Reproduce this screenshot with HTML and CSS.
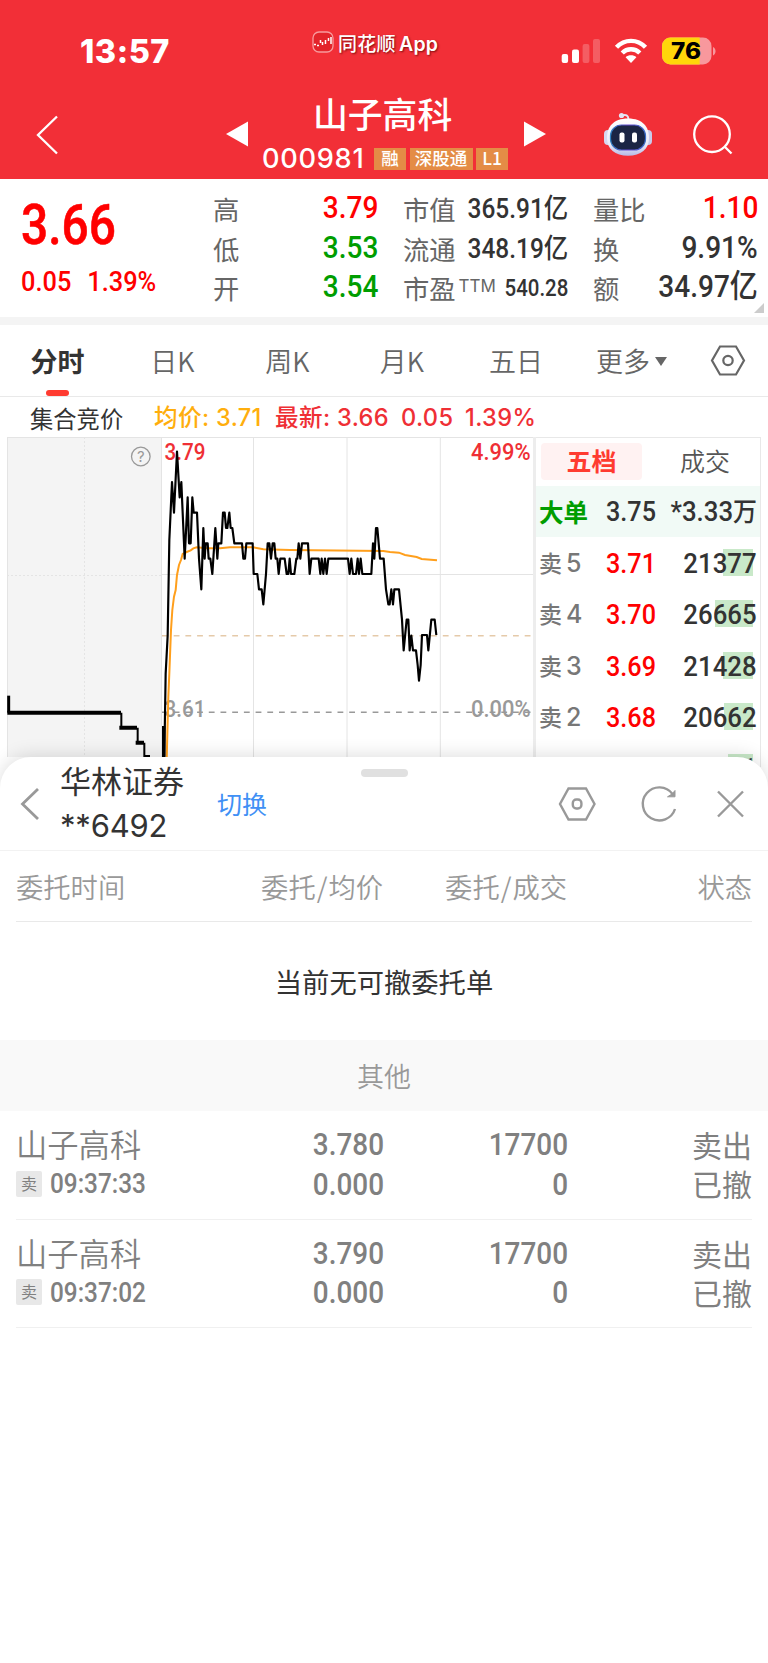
FILE: index.html
```html
<!DOCTYPE html>
<html lang="zh-CN">
<head>
<meta charset="utf-8">
<title>山子高科 000981</title>
<link rel="stylesheet" href="styles.css">
</head>
<body>
<header class="top">
  <div class="status">
    <span class="clock">13:57</span>
    <span class="brand">
      <svg class="brand-logo" width="22" height="22" viewBox="0 0 22 22" fill="none"><rect x="1" y="1" width="20" height="20" rx="6" fill="#e3242b" stroke="#f79a9d" stroke-width="1.3"/><path d="M2 13.5h2M5 14.5h2M8.500 9v3M10.500 11v3M13.500 9v4M16.500 7v3M19 6v7" stroke="#fff" stroke-width="1.5"/></svg>
      <span class="brand-name">同花顺<b>App</b></span>
    </span>
    <svg class="sys" width="158" height="30" viewBox="560 36 158 30">
      <g fill="#fff"><rect x="561.700" y="54" width="6.400" height="9" rx="2"/><rect x="572" y="49.500" width="7" height="13.500" rx="2"/><g opacity=".22"><rect x="582.600" y="44" width="6.800" height="19" rx="2"/><rect x="593" y="39" width="7" height="24" rx="2"/></g></g>
      <g fill="none" stroke="#fff" stroke-width="4.400"><path d="M616.500 47.300C624.500 38.700 637.500 38.700 645.500 47.300"/><path d="M622.200 53C627 48 635 48 639.800 53"/></g>
      <path d="M625.600 57.300C628.500 54.700 633.500 54.700 636.400 57.300L631 63Z" fill="#fff"/>
      <rect x="662" y="37.500" width="49.500" height="27" rx="8.500" fill="#f8989d"/>
      <path d="M670.500 37.500H699.700V64.500H670.500A8.500 8.500 0 0 1 662 56V46A8.500 8.500 0 0 1 670.500 37.500Z" fill="#ffd60a"/>
      <path d="M713 47c3.400 1.500 3.400 7 0 8.500z" fill="#f8989d"/>
      <text class="battery" x="686" y="59.300" text-anchor="middle" textLength="30" lengthAdjust="spacingAndGlyphs">76</text>
    </svg>
  </div>
  <div class="nav">
    <svg class="back" width="24" height="42" viewBox="36 114 24 42"><path d="M57 116.500 38 135 57 153.500" fill="none" stroke="#fff" stroke-width="2.300"/></svg>
    <svg class="prev" width="24" height="26" viewBox="225 121.500 24 26"><path d="M226 134.500 248 122v25z" fill="#fff"/></svg>
    <div class="stock">
      <div class="stock-name">山子高科</div>
      <div class="stock-meta"><span class="code">000981</span><span class="tag t1">融</span><span class="tag t2">深股通</span><span class="tag t3">L1</span></div>
    </div>
    <svg class="next" width="24" height="26" viewBox="523 121.500 24 26"><path d="M546 134.500 524 122v25z" fill="#fff"/></svg>
    <svg class="robot" width="50" height="46" viewBox="603 111 50 46">
      <defs><linearGradient id="shell" x2="0" y2="1"><stop stop-color="#fff"/><stop offset=".7" stop-color="#e9eaf8"/><stop offset="1" stop-color="#b7b9e5"/></linearGradient><linearGradient id="rim"><stop stop-color="#2c7fc0"/><stop offset=".5" stop-color="#6a48d0"/><stop offset="1" stop-color="#3a6cc8"/></linearGradient></defs>
      <path d="M622 115.500Q628 113.500 628.500 119" fill="none" stroke="#e4e4f4" stroke-width="2"/><circle cx="621.500" cy="115.500" r="2.600" fill="#e4e4f4"/>
      <rect x="604" y="130" width="9" height="15" rx="4" fill="#d6d7f0"/><rect x="643" y="130" width="9" height="15" rx="4" fill="#c9caeb"/>
      <path d="M628 118.500C643 118.500 649 127 649 138S641 155.800 628 155.800 607 149 607 138 613 118.500 628 118.500Z" fill="url(#shell)"/>
      <rect x="610.500" y="125" width="35" height="25" rx="11" fill="#1b2544" stroke="url(#rim)" stroke-width="1.200"/>
      <rect x="619.500" y="132.500" width="5" height="10" rx="2" fill="#fff"/><rect x="632" y="132.500" width="5" height="10" rx="2" fill="#fff"/>
    </svg>
    <svg class="search" width="42" height="42" viewBox="692 114 42 42" fill="none" stroke="#fff" stroke-width="2.300"><circle cx="712" cy="134.200" r="17.800"/><path d="M724.500 146.500 731.500 153.500"/></svg>
  </div>
</header>

<section class="quote">
  <div class="price-box"><div class="price">3.66</div><div class="change"><span>0.05</span><span>1.39%</span></div></div>
  <dl class="col c1"><div><dt>高</dt><dd class="red">3.79</dd></div><div><dt>低</dt><dd class="green">3.53</dd></div><div><dt>开</dt><dd class="green">3.54</dd></div></dl>
  <dl class="col c2"><div><dt>市值</dt><dd>365.91<i>亿</i></dd></div><div><dt>流通</dt><dd>348.19<i>亿</i></dd></div><div><dt>市盈<sup>TTM</sup></dt><dd class="small">540.28</dd></div></dl>
  <dl class="col c3"><div><dt>量比</dt><dd class="red">1.10</dd></div><div><dt>换</dt><dd>9.91%</dd></div><div><dt>额</dt><dd>34.97<i>亿</i></dd></div></dl>
  <svg class="corner" width="10" height="10"><path d="M10 0v10H0z" fill="#ccc"/></svg>
</section>

<nav class="tabs">
  <span class="tab on">分时</span><span class="tab">日K</span><span class="tab">周K</span><span class="tab">月K</span><span class="tab">五日</span><span class="tab more">更多<svg width="12" height="9"><path d="M0 0h12L6 9z" fill="#666"/></svg></span>
  <svg class="gear" width="36" height="32" viewBox="710.500 345 36 32" fill="none" stroke="#666" stroke-width="2.200"><path d="M720.500 346.500h16L744.500 360.500l-8 14h-16L712.500 360.500Z"/><circle cx="728.500" cy="360.500" r="4.700"/></svg>
</nav>

<div class="legend"><span class="l0">集合竞价</span><span class="l1">均价: 3.71</span><span class="l2">最新: 3.66</span><span class="l3">0.05</span><span class="l4">1.39%</span></div>

<main class="market">
  <svg class="chart" width="529" height="320" viewBox="7 437 529 320">
    <rect x="7" y="437" width="154" height="330" fill="#f4f4f4"/>
    <g stroke="#e4e4e4" fill="none"><path d="M7 437.500H536M7.500 437V767M253.500 437V767M347 437V767M440.300 437V767M161 574.500H536M161.500 437V767"/><path d="M84.500 437V767M7 575.500H161" stroke-dasharray="2 2"/></g>
    <path d="M534.500 437V767" stroke="#ededed" stroke-width="3"/>
    <path d="M162 635.700H533" stroke="#e5caa9" stroke-width="1.500" stroke-dasharray="5.800 5.900"/>
    <path d="M162 712.300H533" stroke="#999" stroke-width="1.500" stroke-dasharray="5.800 5.900"/>
    <circle cx="140.800" cy="456.500" r="9.300" fill="none" stroke="#999" stroke-width="1.300"/>
    <text x="140.800" y="462" class="help" text-anchor="middle">?</text>
    <g class="num">
      <text x="164.500" y="459.500" textLength="41" lengthAdjust="spacingAndGlyphs" fill="#ef2f35">3.79</text>
      <text x="471" y="459.500" textLength="59.500" lengthAdjust="spacingAndGlyphs" fill="#ef2f35">4.99%</text>
      <text x="164.500" y="716.500" textLength="41" lengthAdjust="spacingAndGlyphs" fill="#999">3.61</text>
      <text x="471" y="716.500" textLength="59.500" lengthAdjust="spacingAndGlyphs" fill="#999">0.00%</text>
    </g>
    <g fill="none" stroke="#000" transform="translate(0 430) scale(.33333)">
      <path d="M26 797V848" stroke-width="9"/><path d="M22 848H363M358 893H411M407 938H432" stroke-width="12"/><path d="M364 848V893M413 893V938M433 938V978H450" stroke-width="6"/>
      <path d="M500 990 505 800 508 730 513 600 517 540 522 500 527 480 531 435 537 405 543 390 548 372 560 366 572 361 580 355 590 352 620 355 660 355 690 352 760 352 790 358 870 360 1150 363 1170 366 1197 368 1215 375 1250 381 1265 387 1311 391" stroke="#ff9f1c" stroke-width="6"/>
      <path d="M491 990V888" stroke-width="10"/>
      <path d="M493 980 497 730 503 617 508 330 516 156 522 248 531 65 539 202 544 156 554 386 563 202 567 340 572 340 577 202 581 248 591 248 597 386 604 478 610 294 614 386 617 340 623 340 626 386 631 386 637 432 646 294 652 386 655 340 664 340 669 248 674 248 678 294 682 294 688 248 692 294 697 294 703 340 726 340 730 386 735 386 739 340 758 340 761 432 772 432 777 478 785 478 790 523 798 432 803 340 808 340 813 386 818 340 823 340 827 386 832 386 836 432 841 386 854 386 860 432 865 432 869 386 873 432 883 432 889 386 892 386 896 340 901 386 906 340 924 340 929 432 934 386 956 386 961 432 965 386 970 432 975 386 980 432 985 386 1044 386 1049 432 1054 386 1059 432 1068 432 1073 386 1077 432 1082 386 1087 432 1114 432 1119 340 1123 386 1128 294 1132 294 1140 386 1151 386 1158 478 1165 523 1169 523 1174 478 1179 523 1183 478 1197 478 1206 569 1211 661 1220 569 1225 569 1229 661 1234 617 1239 661 1248 661 1253 705 1257 752 1262 705 1266 615 1281 615 1285 661 1294 569 1304 569 1309 615" stroke-width="6.500" stroke-linejoin="round"/>
    </g>
  </svg>
  <aside class="book">
    <div class="book-tabs"><span class="on">五档</span><span>成交</span></div>
    <div class="lvl big"><span class="who">大单</span><span class="p">3.75</span><span class="v"><b>*3.33<i>万</i></b></span></div>
    <div class="lvl"><span class="who">卖<em>5</em></span><span class="p red">3.71</span><span class="v"><s class="bar" style="width:30px"></s><b>21377</b></span></div>
    <div class="lvl"><span class="who">卖<em>4</em></span><span class="p red">3.70</span><span class="v"><s class="bar" style="width:38px"></s><b>26665</b></span></div>
    <div class="lvl"><span class="who">卖<em>3</em></span><span class="p red">3.69</span><span class="v"><s class="bar" style="width:30px"></s><b>21428</b></span></div>
    <div class="lvl"><span class="who">卖<em>2</em></span><span class="p red">3.68</span><span class="v"><s class="bar" style="width:29px"></s><b>20662</b></span></div>
    <div class="lvl"><span class="who">卖<em>1</em></span><span class="p red">3.67</span><span class="v"><s class="bar" style="width:25px"></s><b>17901</b></span></div>
  </aside>
</main>

<section class="sheet">
  <div class="handle"></div>
  <div class="account">
    <svg class="a-back" width="20" height="36" viewBox="20 786 20 36"><path d="M38 789 22.500 804 38 819" fill="none" stroke="#999" stroke-width="2.800"/></svg>
    <div class="broker"><div>华林证券</div><div class="acct">**6492</div></div>
    <span class="switch">切换</span>
    <svg class="a-icons" width="190" height="40" viewBox="556 784 190 40" fill="none" stroke="#999" stroke-width="2.400">
      <path d="M568.500 788.500h17.500L594.500 804l-8.500 15.500h-17.500L560 804Z"/><rect x="572.800" y="799.500" width="8.600" height="9" rx="3.500"/>
      <path d="M675 809A16.500 16.500 0 1 1 672.500 794"/><path d="M667.500 796.800H675V790.500L672 794Z" fill="#999" stroke-width="1"/>
      <path d="M718 791.500 743 816.500M743 791.500 718 816.500"/>
    </svg>
  </div>
  <div class="orders-head grid"><span>委托时间</span><span>委托<u>/</u>均价</span><span>委托<u>/</u>成交</span><span>状态</span></div>
  <div class="empty">当前无可撤委托单</div>
  <div class="other">其他</div>
  <div class="order grid">
    <div class="name">山子高科<small><i>卖</i><b>09:37:33</b></small></div><div class="n">3.780<br>0.000</div><div class="n">17700<br>0</div><div class="st">卖出<br>已撤</div>
  </div>
  <div class="order grid">
    <div class="name">山子高科<small><i>卖</i><b>09:37:02</b></small></div><div class="n">3.790<br>0.000</div><div class="n">17700<br>0</div><div class="st">卖出<br>已撤</div>
  </div>
</section>
</body>
</html>
```
FILE: styles.css
```css
* { box-sizing: border-box; }
body { margin: 0; width: 768px; height: 1663px; overflow: hidden; background: #fff; color: #333; font-family: "Noto Sans CJK SC", sans-serif; white-space: nowrap; }
svg { display: block; flex: none; }
i, em { font-style: normal; }
.red { color: #f00 !important; }
.green { color: #009d00 !important; }

.top { height: 179px; background: #f22f37; color: #fff; }
.status { height: 90px; display: flex; align-items: flex-start; }
.clock { width: 232px; margin-left: 80px; padding-top: 32px; font: 800 32.500px/40px Inter, sans-serif; letter-spacing: .500px; }
.brand { display: flex; width: 249px; gap: 4px; padding-top: 31px; text-shadow: 1px 1px 2px rgba(90,0,0,.75); }
.brand-name { font-size: 19px; line-height: 24px; font-weight: 500; letter-spacing: .3px; }
.brand-name b { font: 600 19.500px/23px Inter, sans-serif; margin-left: 3px; }
.sys { margin: 36px 0 0 -1px; }
.battery { font: 800 22.500px Inter, sans-serif; fill: #000; }
.nav { height: 89px; display: flex; align-items: flex-start; }
.back { margin: 24px 165px 0 36px; }
.prev, .next { margin-top: 31px; }
.stock { width: 274px; padding-left: 13px; }
.stock-name { height: 55px; margin-left: 51px; font-size: 34.800px; font-weight: 500; line-height: 46px; }
.stock-meta { display: flex; align-items: flex-start; }
.code { width: 112px; font: 500 27.200px/27px Inter, sans-serif; letter-spacing: .7px; }
.tag { height: 22px; margin: 3px 3.500px 0 0; background: #e48c46; font-size: 17.500px; font-weight: 500; line-height: 20px; text-align: center; }
.t1 { width: 32px; } .t2 { width: 63px; } .t3 { width: 32px; }
.robot { margin: 21px 0 0 56px; }
.search { margin: 24px 0 0 39px; }

.quote { position: relative; height: 146px; display: flex; border-bottom: 8px solid #f4f4f4; font-family: Roboto, "Noto Sans CJK SC", sans-serif; font-weight: 500; }
.price-box { width: 213px; padding-left: 21px; color: #f00; }
.price { margin-top: 18px; font-size: 55px; line-height: 57px; transform: scaleX(.87); transform-origin: left; -webkit-text-stroke: .6px #f00; }
.change { display: flex; gap: 18px; margin-top: 11px; font-size: 28.500px; line-height: 34px; transform: scaleX(.89); transform-origin: left; }
.col { margin: 9px 0 0; line-height: 40px; }
.col > div { display: flex; justify-content: space-between; height: 39.700px; }
.col dt { font-family: "Noto Sans CJK SC", sans-serif; font-weight: 400; font-size: 26.300px; color: #666; line-height: 41px; }
.col dd { margin: 0 -1px 0 0; font-size: 31.500px; transform: scaleX(.89); transform-origin: right; }
.col i { font-size: 1em; }
.c1 { width: 164px; margin-right: 26px; }
.c2 { width: 164px; margin-right: 26px; }
.c2 dd { font-size: 27px; line-height: 42px; transform: scaleX(.905); }
.c2 dd.small { font-size: 23.500px; transform: scaleX(.87); }
.col sup { font: 400 17px/10px Inter, sans-serif; vertical-align: 7px; margin-left: 3px; margin-right: -20px; }
.c3 { width: 164px; }
.corner { position: absolute; right: 4px; bottom: 4px; }

.tabs { height: 72px; display: flex; border-bottom: 1px solid #e9e9e9; font-size: 27px; line-height: 71px; color: #666; font-weight: 350; }
.tab { width: 115px; text-align: center; }
.tab:nth-child(n+4) { width: 114px; }
.tab.on { position: relative; font-weight: 700; color: #333; }
.tab.on::after { content: ""; position: absolute; left: 46px; bottom: 0; width: 23px; height: 6px; border-radius: 3px; background: #ff3b30; }
.tab.more { display: flex; gap: 5px; padding-left: 23px; width: 137px; }
.more svg { margin-top: 32px; }
.gear { margin: 20px 0 0 0; }

.legend { height: 40px; display: grid; grid-template-columns: 124px 121px 126px 64px 100px; padding-left: 30px; font: 500 23.600px/42px Inter, "Noto Sans CJK SC", sans-serif; letter-spacing: .35px; color: #ef2f35; }
.l0 { color: #333; font-weight: 400; font-size: 23.300px; line-height: 45px; letter-spacing: 0; }
.l1 { color: #ffae0d; }

.market { height: 320px; display: flex; padding-left: 7px; }
.num { font: 500 23.500px Roboto, sans-serif; }
.help { font: 400 15px Inter, sans-serif; fill: #999; }
.book { flex: none; width: 225px; height: 330px; overflow: hidden; border: solid #e8e8e8; border-width: 1px 1px 0 0; font-family: Roboto, "Noto Sans CJK SC", sans-serif; font-weight: 500; }
.book-tabs { display: flex; height: 48px; padding: 5px 0 0 5px; font: 350 25px/35px "Noto Sans CJK SC", sans-serif; color: #555; }
.book-tabs span { flex: none; width: 126px; text-align: center; }
.book-tabs .on { width: 101px; height: 37px; border-radius: 4px; background: #fff2f2; color: #ff3b30; font-weight: 700; }
.lvl { display: flex; height: 51.200px; line-height: 53px; font-size: 28px; padding-left: 3px; }
.big { background: #f1faf6; line-height: 52px; }
.who { flex: none; width: 67px; font: 500 23px/51px "Noto Sans CJK SC", sans-serif; color: #777; }
.who em { font-family: Inter, sans-serif; font-size: 25px; margin-left: 4px; }
.big .who { font-size: 24.500px; font-weight: 700; color: #009d00; line-height: 51px; }
.p { flex: none; width: 52px; transform: scaleX(.9); transform-origin: left; }
.v { flex: none; position: relative; width: 98.500px; display: flex; justify-content: flex-end; z-index: 0; }
.v b { font-weight: 500; transform: scaleX(.92); transform-origin: right; }
.v i { font-size: 26px; }
.bar { position: absolute; z-index: -1; right: 3.500px; top: 12px; height: 27px; background: #c9e9c9; }

.sheet { position: relative; height: 906px; background: #fff; border-radius: 31px 31px 0 0; box-shadow: 0 -2px 18px rgba(0,0,0,.13); }
.handle { position: absolute; left: 361px; top: 11.500px; width: 47px; height: 8px; border-radius: 4px; background: #e0e0e0; }
.account { height: 94px; border-bottom: 1px solid #f2f2f2; display: flex; align-items: flex-start; }
.a-back { margin: 29px 20px 0 20px; }
.broker { width: 157px; font-size: 31px; line-height: 46px; }
.acct { font-family: Inter, sans-serif; font-size: 31px; line-height: 45px; font-weight: 400; letter-spacing: -.200px; }
.switch { width: 339px; font-size: 25px; line-height: 92px; color: #4090f5; }
.a-icons { margin-top: 27px; }
.grid { display: grid; grid-template-columns: 187px 180px 184px 1fr; text-align: right; margin: 0 16px; }
.grid > :first-child { text-align: left; }
.orders-head { height: 71px; font-size: 27.300px; font-weight: 350; line-height: 71px; color: #999; border-bottom: 1px solid #e9e9e9; }
.orders-head u { text-decoration: none; margin: 0 1px; }
.empty { height: 118px; line-height: 118px; text-align: center; font-size: 27.300px; }
.other { height: 71px; line-height: 71px; text-align: center; font-size: 27px; font-weight: 350; background: #f9f9f9; color: #999; }
.order { height: 108.500px; padding-top: 14px; border-bottom: 1px solid #f0f0f0; color: #808080; line-height: 39px; }
.name { font-size: 31.300px; font-weight: 350; line-height: 37px; }
.name small { display: flex; align-items: center; font: 500 28px/39px Roboto, sans-serif; margin-top: 2px; }
.name b { font-weight: 500; transform: scaleX(.87); transform-origin: left; }
.name small i { flex: none; width: 26px; height: 26px; margin-right: 8px; background: #e8e8e8; border-radius: 2px; font: 400 16px/25px "Noto Sans CJK SC", sans-serif; text-align: center; }
.n { font: 500 31px/39.500px Roboto, sans-serif; transform: scaleX(.9); transform-origin: right; margin-right: -1px; }
.st { font-size: 30px; }
```
